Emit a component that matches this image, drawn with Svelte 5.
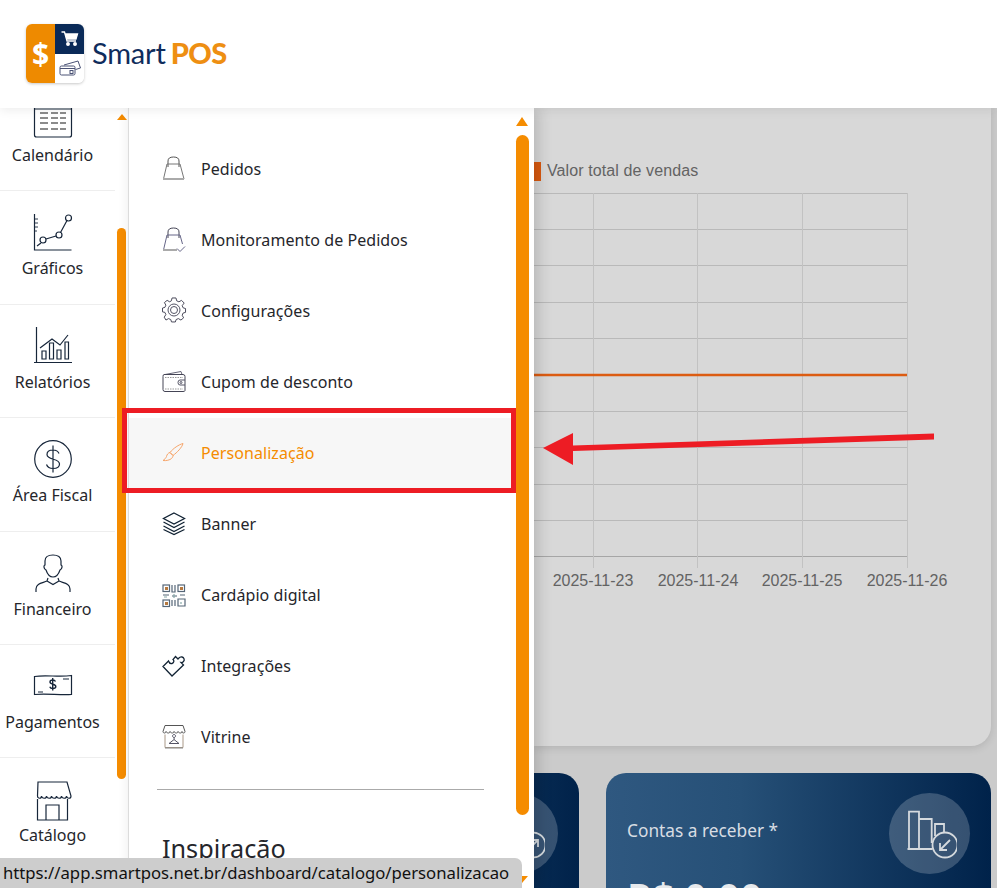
<script>
	const gridRows = [12.5, 48.5, 84.5, 121.5, 157.5, 230.5, 266.5, 303.5, 339.5];
	const gridCols = [59.5, 163.5, 268.5, 373.5];
	const dates = [['2025-11-23', 59], ['2025-11-24', 164], ['2025-11-25', 268], ['2025-11-26', 373]];
</script>

{#snippet navItem(label, icon)}
	<li class="nav-item">
		<svg class="nav-icon" viewBox="0 0 38 38" width="38" height="38" fill="none" stroke="currentColor" stroke-width="1.2">
			{@render icon()}
		</svg>
		<span>{label}</span>
	</li>
{/snippet}

{#snippet subItem(label, icon, active = false)}
	<li class="sub-item" class:active>
		<svg viewBox="0 0 24 24" width="24" height="24" fill="none" stroke="currentColor" stroke-width="1">
			{@render icon()}
		</svg>
		<span>{label}</span>
	</li>
{/snippet}

{#snippet calendarIcon()}
	<path d="M.5 0v35q0 2 2 2h33q2 0 2-2V0" />
	<path d="M.5 9h37" />
	<path d="M6 13h8m3 0h7m2 0h6M6 18h8m3 0h7m2 0h6M6 23h8m3 0h7m2 0h6M6 29h8m3 0h7m2 0h6" stroke="#666" stroke-width="1.7" />
{/snippet}

{#snippet chartIcon()}
	<path d="M.5 1v36h37" />
	<path d="M1 6h3M1 10h3M1 14h3M1 18h2" stroke-width=".9" />
	<circle cx="9" cy="27" r="3" />
	<circle cx="25" cy="22" r="3" />
	<circle cx="34.500" cy="5" r="3" />
	<path d="M12 26l10-3M26.500 19.500l6.500-12M7 30l-4 3" />
{/snippet}

{#snippet reportIcon()}
	<path d="M2.500 0v36M0 35.500h38" />
	<path d="M8 24h4v8H8zM15.500 16h4v16h-4zM23 23h4v9h-4zM31 15h3.500v17H31z" />
	<path d="M6 21l12-9 8 6 8-10" />
{/snippet}

{#snippet fiscalIcon()}
	<circle cx="19" cy="19" r="18.300" />
	<path d="M25 13.500c-1-2.500-3-3.500-6-3.500-3.500 0-6 1.700-6 4.500 0 6 12.500 3.500 12.500 9.500 0 3-2.800 4.500-6.500 4.500-3.300 0-5.500-1.300-6.500-4M19 5.500v27" />
{/snippet}

{#snippet personIcon()}
	<path d="M19 1c-5 0-8 1.500-8 6v4c-1.500 0-1.500 4 1 5 1 3 3 7 7 7s6-4 7-7c2.500-1 2.500-5 1-5V7c0-4-3-6-8-6z" />
	<path d="M2 38v-3c0-6 7-6 11-8l1-3M36 38v-3c0-6-7-6-11-8l-1-3M13 27l6 3.500 6-3.500" />
{/snippet}

{#snippet moneyIcon()}
	<path d="M.5 9.500c12-2 24 1 37-1v19c-12 1-25-1.500-37 0z" />
	<path d="M4 25h5M29 12h6" />
	<path d="M21.500 14.500c-.5-1-1.500-1.500-2.800-1.500-1.500 0-2.700.8-2.700 2 0 2.800 5.800 1.700 5.800 4.500 0 1.300-1.300 2-3 2-1.500 0-2.600-.6-3-1.800M18.700 11v12.500" stroke-width="1.400" />
{/snippet}

{#snippet storeIcon()}
	<path d="M4 2h29l4 14c0 3-4 3-4.500 0 0 3-4.500 3-5 0 0 3-4.500 3-5 0 0 3-4.500 3-5 0 0 3-4.500 3-5 0 0 3-4.500 3-5 0 0 3-4 3-4 0z" />
	<path d="M3.500 19v21h30V19M12 40V25h13v15" />
{/snippet}

{#snippet bagIcon()}
	<path d="M6 9V3q0-4 5.500-4T17 3v6" stroke="#555" />
	<path d="M5 6h13l4 15H1.500z" stroke="#777" />
	<path d="M1 21h21" stroke="#aaa" stroke-width="2" />
{/snippet}

{#snippet monitorIcon()}
	<path d="M6 9V3q0-4 5.500-4T17 3v6" stroke="#445" />
	<path d="M5 6h13l2.500 9M5 6L1.500 21" stroke="#668" />
	<path d="M1 21h14" stroke="#aaa" stroke-width="2" />
	<path d="M15 19.500l3 3 5-5" stroke="#668" />
{/snippet}

{#snippet gearIcon()}
	<g transform="translate(0 -2)">
		<path d="M10 1h4l.8 3 2.300 1 2.700-1.500 2.800 2.800L20.500 9l1 2.300 2.500.7v4l-2.500.7-1 2.300 1.500 2.700-2.800 2.300-2.700-1.500-2.300 1-.8 2.500h-4l-.8-2.500-2.300-1-2.700 1.500L1.800 21 3.500 18.300l-1-2.300L0 15.500v-4l2.500-.7 1-2.300L2 5.800 4.800 3.500 7.500 5l1.700-1z" transform="translate(.5 -1) scale(.96)" stroke="#445" />
		<circle cx="12" cy="12" r="6" stroke="#556" />
		<circle cx="12" cy="12" r="3.500" stroke="#556" />
	</g>
{/snippet}

{#snippet walletIcon()}
	<g transform="translate(0 -2.500)">
		<path d="M3 6l16-3 1 3" stroke="#667" />
		<path d="M2 6h19q2 0 2 2v14q0 1-2 1H3q-2 0-2-2V8q0-2 1-2z" stroke="#445" />
		<path d="M3 9h18M3 20.500h18" stroke="#999" stroke-dasharray="1.500 1" />
		<path d="M23 11.500h-5q-2 0-2 2.500t2 2.500h5" stroke="#556" />
		<circle cx="19" cy="14" r="1" stroke="#556" />
	</g>
{/snippet}

{#snippet brushIcon()}
	<path d="M21 1.500c-4 1-10 5-13 9l3 3c4-3 9-8 10-12z" />
	<path d="M8 10.500c-2 .5-3 2-3.500 4-.5 1.500-2 3-3.500 4 3 .5 7-.5 8.500-2 1-1 1.500-2 1.500-3z" />
{/snippet}

{#snippet layersIcon()}
	<g stroke="#123" stroke-width="1.300" transform="translate(0 -1)">
		<path d="M12 1l10.500 5.500L12 12 1.500 6.500z" />
		<path d="M1.500 10.500L12 16l10.500-5.500M1.500 14.500L12 20l10.500-5.500M1.500 18L12 23l10.500-5" transform="translate(0 -.5)" />
	</g>
{/snippet}

{#snippet qrIcon()}
	<g stroke="#567" stroke-width="1.200">
		<rect x="1" y="1" width="6.500" height="6.500" />
		<rect x="16" y="1" width="6.500" height="6.500" />
		<rect x="1" y="16" width="6.500" height="6.500" />
		<path d="M10 1v7h3V1M10 12h5M18 11h5M1 11h6M10 16v6m3-6v6M16 15h7v7h-7z" />
		<path d="M2 13h3M12 10v4M19 18v2" stroke="#8aa" />
	</g>
	<path d="M3 3h3v3H3zM18 3h3v3h-3zM3 18h3v3H3z" fill="#b6793f" stroke="none" />
{/snippet}

{#snippet puzzleIcon()}
	<path d="M10 21L1 11.500 6.500 6c.5 1.500 1.500 3 3.500 2.500S12.500 5.500 11 4.500l2.500-3L16 4c1-1 2-2.500 4-2s3 3 1.500 4.500-2 1-2.500 1l2.500 2.500z" stroke="#123" stroke-width="1.300" />
{/snippet}

{#snippet shopIcon()}
	<g transform="translate(0 -1.500)">
		<path d="M3 1h18l2 6c0 2-3 2-3 0 0 2-3 2-4 0 0 2-3 2-4 0 0 2-3 2-4 0 0 2-3 2-4 0 0 2-3 2-3 0z" stroke="#555" />
		<path d="M3 10v13h18V10" stroke="#a98" />
		<path d="M3 23.500h18" stroke="#888" />
		<path d="M12 13a1.500 1.500 0 1 1 .1 0v2L7 19h10l-5-4" stroke="#556" />
	</g>
{/snippet}

{#snippet summaryIcon(arrow)}
	<svg viewBox="0 0 54 50" width="54" height="50" fill="none" stroke="#d5dade" stroke-width="1.800">
		<path d="M4.500 40h25M6 40V2.700h10V40M16 10h12.700v24M32 27V15h9v8" />
		<circle cx="42" cy="36" r="12.500" />
		{#if arrow === 'in'}
			<path d="M47 31L37 41M37 34v7h7" />
		{:else}
			<path d="M37 41l10-10M40 31h7v7" />
		{/if}
	</svg>
{/snippet}

<div class="page">
	<header class="topbar">
		<div class="logo-mark">
			<div class="logo-left">$</div>
			<div class="logo-cart">
				<svg viewBox="0 0 18 16" width="18" height="16" fill="none" stroke="#fff" stroke-width="1.300">
					<path d="M.5 1h3l2.500 9h9" />
					<path d="M4.500 3h12l-1.500 5H6z" fill="#fff" />
					<circle cx="7" cy="13" r="1.300" fill="#fff" />
					<circle cx="14" cy="13" r="1.300" fill="#fff" />
				</svg>
			</div>
			<div class="logo-card">
				<svg viewBox="0 0 22 18" width="22" height="18" fill="none" stroke="#4a5275" stroke-width="1">
					<path d="M5 6l14-4 2.500 7-5 1.500" />
					<rect x="1" y="7" width="15" height="9" rx="1.500" fill="#fff" />
					<path d="M1 9.500h15" />
					<rect x="11" y="11.500" width="3" height="3" />
				</svg>
			</div>
		</div>
		<div class="logo-text"><span class="smart">Smart</span><span class="pos">POS</span></div>
	</header>

	<div class="layout">
		<nav class="sidebar">
			<ul>
				{@render navItem('Calendário', calendarIcon)}
				{@render navItem('Gráficos', chartIcon)}
				{@render navItem('Relatórios', reportIcon)}
				{@render navItem('Área Fiscal', fiscalIcon)}
				{@render navItem('Financeiro', personIcon)}
				{@render navItem('Pagamentos', moneyIcon)}
				{@render navItem('Catálogo', storeIcon)}
			</ul>
			<div class="arrow-up small"></div>
			<div class="thumb small"></div>
		</nav>

		<aside class="submenu">
			<ul>
				{@render subItem('Pedidos', bagIcon)}
				{@render subItem('Monitoramento de Pedidos', monitorIcon)}
				{@render subItem('Configurações', gearIcon)}
				{@render subItem('Cupom de desconto', walletIcon)}
				{@render subItem('Personalização', brushIcon, true)}
				{@render subItem('Banner', layersIcon)}
				{@render subItem('Cardápio digital', qrIcon)}
				{@render subItem('Integrações', puzzleIcon)}
				{@render subItem('Vitrine', shopIcon)}
			</ul>
			<hr />
			<h3>Inspiração</h3>
			<div class="arrow-up"></div>
			<div class="thumb"></div>
			<div class="arrow-down"></div>
		</aside>

		<main class="content">
			<section class="chart-card">
				<div class="legend"><i></i><span>Valor total de vendas</span></div>
				<svg class="chart" viewBox="0 0 457 420" width="457" height="420">
					<g stroke="#b9b9b9" stroke-width="1">
						{#each gridRows as y}
							<line x1="0" x2="373" y1={y} y2={y} />
						{/each}
						<line x1="0" x2="373" y1="375.500" y2="375.500" stroke="#a6a6a6" />
					</g>
					<g stroke="#c2c2c2" stroke-width="1">
						{#each gridCols as x}
							<line x1={x} x2={x} y1="12" y2="387" />
						{/each}
					</g>
					<line x1="0" x2="373" y1="194" y2="194" stroke="#dc5c12" stroke-width="2.500" />
					{#each dates as [label, x]}
						<text {x} y="405" text-anchor="middle">{label}</text>
					{/each}
				</svg>
			</section>

			<div class="summary-row">
				<article class="summary">
					<div class="summary-circle">{@render summaryIcon('out')}</div>
				</article>
				<article class="summary">
					<p class="summary-title">Contas a receber *</p>
					<p class="summary-value">R$ 0,00</p>
					<div class="summary-circle">{@render summaryIcon('in')}</div>
				</article>
			</div>
		</main>
	</div>

	<!-- anotações do tutorial -->
	<div class="highlight-box"></div>
	<svg class="pointer" viewBox="0 0 400 40" width="400" height="40">
		<path d="M391 4.500v6L30 22v14L0 19 30 4v12.500z" fill="#ed1c24" />
	</svg>

	<div class="status-url">https://app.smartpos.net.br/dashboard/catalogo/personalizacao</div>
</div>

<style>
	:global(body) {
		margin: 0;
		background: #fff;
	}

	.page {
		position: relative;
		display: flex;
		flex-direction: column;
		width: 997px;
		height: 888px;
		overflow: hidden;
		font-family: 'Noto Sans', 'Open Sans', sans-serif;
		color: #25262b;
	}

	ul {
		list-style: none;
		margin: 0;
		padding: 0;
	}

	.topbar {
		position: relative;
		z-index: 3;
		display: flex;
		align-items: center;
		flex: none;
		gap: 8px;
		height: 108px;
		padding-left: 26px;
		box-sizing: border-box;
		background: #fff;
		box-shadow: 0 2px 10px rgba(0, 0, 0, 0.08);
	}

	.logo-mark {
		display: grid;
		grid-template-columns: 29px 29px;
		grid-template-rows: 30px 29px;
		margin-top: -2px;
		border-radius: 6px;
		overflow: hidden;
		box-shadow: 0 1px 3px rgba(0, 0, 0, 0.22);
	}

	.logo-left {
		grid-row: 1 / 3;
		display: flex;
		align-items: center;
		justify-content: center;
		background: #ee8a00;
		color: #fff;
		font-family: 'Open Sans', sans-serif;
		font-size: 30px;
		font-weight: 700;
	}

	.logo-cart {
		display: flex;
		align-items: center;
		justify-content: center;
		background: #0a2a58;
	}

	.logo-card {
		display: flex;
		align-items: center;
		justify-content: center;
		background: #fff;
	}

	.logo-text {
		display: flex;
		gap: 5px;
		margin-top: -2px;
		font-family: 'Lato', sans-serif;
		font-size: 29px;
		line-height: 36px;
	}

	.smart {
		color: #0f2c5c;
		font-weight: 400;
		letter-spacing: -0.2px;
	}

	.pos {
		color: #ee8f12;
		font-weight: 900;
		letter-spacing: -0.5px;
	}

	.layout {
		display: flex;
		flex: 1;
		min-height: 0;
	}

	.sidebar {
		position: relative;
		flex: none;
		width: 129px;
		box-sizing: border-box;
		border-right: 1px solid #e6e6e6;
		background: #fff;
		overflow: hidden;
	}

	.sidebar ul {
		width: 115px;
		margin-top: -30px;
	}

	.nav-item {
		display: flex;
		flex-direction: column;
		align-items: center;
		gap: 6px;
		height: 113.4px;
		padding: 22px 10px 0 0;
		box-sizing: border-box;
		border-bottom: 1px solid #eee;
		color: #17263a;
		font-size: 16px;
		line-height: 22px;
		white-space: nowrap;
	}

	.nav-item span {
		color: #25262b;
	}

	.nav-icon {
		display: block;
		overflow: visible;
	}

	.arrow-up {
		position: absolute;
		top: 9px;
		left: 387px;
		border-style: solid;
		border-width: 0 6px 9px;
		border-color: transparent transparent #f58c00;
	}

	.arrow-up.small {
		top: 6px;
		left: 117px;
		border-width: 0 5px 6px;
	}

	.thumb {
		position: absolute;
		top: 27px;
		left: 387px;
		width: 13px;
		height: 680px;
		border-radius: 7px;
		background: #f58c00;
	}

	.thumb.small {
		top: 120px;
		left: 117px;
		width: 9px;
		height: 551px;
		border-radius: 5px;
	}

	.arrow-down {
		position: absolute;
		top: 768px;
		left: 387px;
		border-style: solid;
		border-width: 7px 6px 0;
		border-color: #f58c00 transparent transparent;
	}

	.submenu {
		position: relative;
		z-index: 2;
		flex: none;
		width: 405px;
		padding-top: 26px;
		box-sizing: border-box;
		background: #fff;
		box-shadow: 4px 0 14px rgba(0, 0, 0, 0.16);
	}

	.sub-item {
		display: flex;
		align-items: center;
		gap: 15px;
		width: 387px;
		height: 71px;
		padding-left: 33px;
		box-sizing: border-box;
		color: #25262b;
		font-size: 16px;
		letter-spacing: 0.06px;
	}

	.sub-item span {
		margin-top: -2px;
	}

	.sub-item.active {
		background: #f7f7f7;
		color: #f58c00;
	}

	.sub-item.active svg {
		color: #f6a56a;
	}

	.sub-item svg {
		flex: none;
		overflow: visible;
	}

	.submenu hr {
		width: 327px;
		margin: 16px 0 0 28px;
		border: 0;
		border-top: 1px solid #aaa;
	}

	.submenu h3 {
		margin: 40px 0 0 33px;
		font-size: 25.200px;
		font-weight: 400;
		line-height: 36px;
	}

	.content {
		flex: 1;
		min-width: 0;
		padding-right: 6px;
		background: #cbcbcb;
		overflow: hidden;
	}

	.chart-card {
		height: 638px;
		padding-top: 53px;
		box-sizing: border-box;
		border-radius: 0 0 20px 0;
		background: #d8d8d8;
		box-shadow: 0 2px 8px rgba(0, 0, 0, 0.12);
	}

	.legend {
		display: flex;
		align-items: center;
		gap: 6px;
		height: 20px;
		color: #636363;
		font-family: 'Liberation Sans', sans-serif;
		font-size: 16px;
		letter-spacing: 0.1px;
	}

	.legend i {
		width: 7px;
		height: 19px;
		margin-top: 1px;
		background: #d9590f;
	}

	.chart {
		display: block;
	}

	.chart text {
		fill: #636363;
		font-family: 'Liberation Sans', sans-serif;
		font-size: 16px;
	}

	.summary-row {
		display: grid;
		grid-template-columns: 385px 385px;
		gap: 27px;
		width: 797px;
		margin: 27px 0 0 -340px;
	}

	.summary {
		position: relative;
		height: 200px;
		padding: 44px 21px 0;
		box-sizing: border-box;
		border-radius: 20px;
		background: linear-gradient(90deg, #2f5880 0%, #265077 35%, #00224a 100%);
		color: #d8dde3;
	}

	.summary-title {
		margin: 0;
		font-size: 17.300px;
		line-height: 28px;
	}

	.summary-value {
		margin: 30px 0 0;
		color: #e6e9ec;
		font-size: 39px;
		font-weight: 600;
		line-height: 44px;
	}

	.summary-circle {
		position: absolute;
		top: 20px;
		right: 21px;
		display: flex;
		align-items: center;
		justify-content: center;
		width: 81px;
		height: 81px;
		border-radius: 50%;
		background: rgba(255, 255, 255, 0.2);
	}

	.highlight-box {
		position: absolute;
		top: 408px;
		left: 122px;
		z-index: 4;
		width: 394px;
		height: 85px;
		box-sizing: border-box;
		border: 5px solid #ed1c24;
	}

	.pointer {
		position: absolute;
		top: 429px;
		left: 543px;
		z-index: 4;
	}

	.status-url {
		position: absolute;
		bottom: 0;
		left: 0;
		z-index: 5;
		width: 522px;
		height: 30px;
		padding-left: 3px;
		box-sizing: border-box;
		border-top-right-radius: 7px;
		background: #cdcdcd;
		color: #111;
		font-family: 'Noto Sans', sans-serif;
		font-size: 16.700px;
		line-height: 30px;
		white-space: nowrap;
	}
</style>
